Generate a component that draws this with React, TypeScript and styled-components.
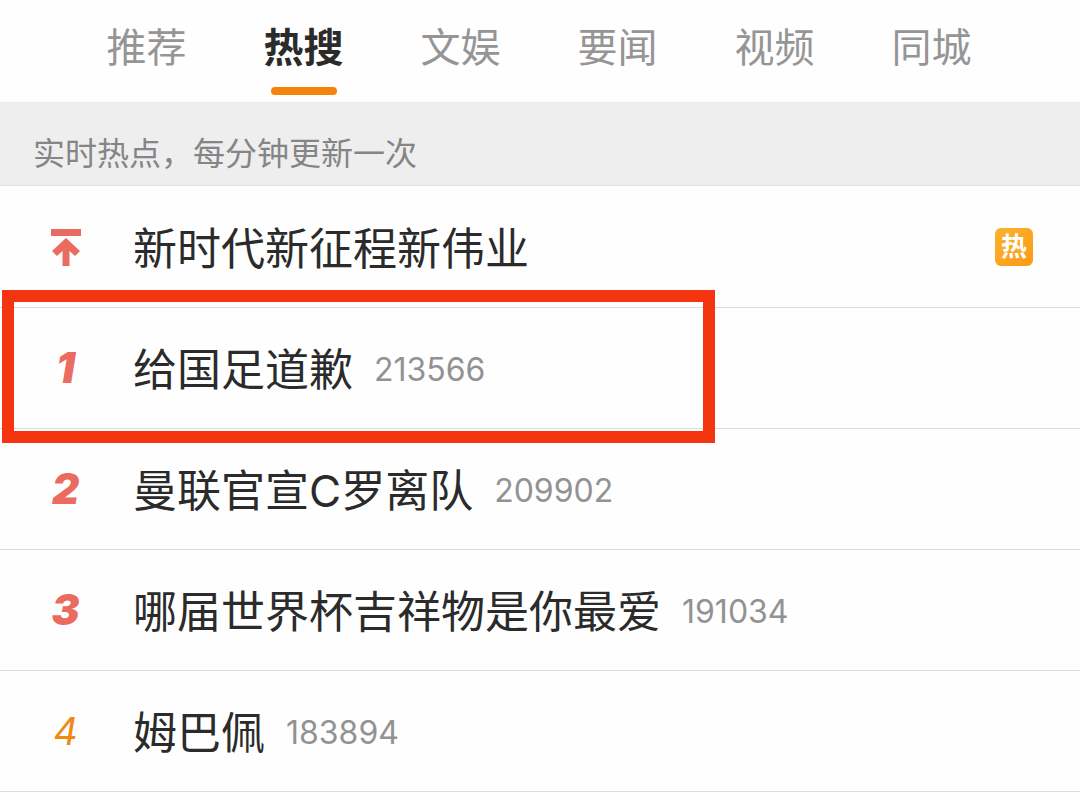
import React from "react";
import styled, { createGlobalStyle } from "styled-components";

const GlobalStyle = createGlobalStyle`
  *, *::before, *::after { box-sizing: border-box; }
  body {
    margin: 0;
    background: #fefefe;
    color: #2b2b2b;
    font-family: Inter, "Noto Sans CJK SC", sans-serif;
  }
`;

const Page = styled.main`
  min-height: 100vh;
`;

const TabBar = styled.nav`
  display: flex;
  padding: 18px 70px 7px 68px;
`;

const Tab = styled.button<{ $active: boolean }>`
  flex: 1;
  display: flex;
  flex-direction: column;
  align-items: center;
  gap: 9px;
  padding: 0;
  border: 0;
  background: none;
  font-family: inherit;
  font-size: 40px;
  line-height: 60px;
  font-weight: ${(p) => (p.$active ? 700 : 400)};
  color: ${(p) => (p.$active ? "#2b2b2b" : "#959595")};
  white-space: nowrap;
  cursor: pointer;

  &::after {
    content: "";
    width: 66px;
    height: 8px;
    border-radius: 4px;
    background: ${(p) => (p.$active ? "#f4820d" : "transparent")};
  }
`;

const Notice = styled.p`
  margin: 0;
  padding: 28px 33px 7px;
  background: #eeeeee;
  border-bottom: 1px solid #e4e4e4;
  color: #858585;
  font-size: 32px;
  line-height: 48px;
`;

const List = styled.ol`
  list-style: none;
  margin: 0;
  padding: 1px 0 0;
`;

const Item = styled.li`
  position: relative;
  border-bottom: 1px solid #dcdcdc;
`;

const TopicLink = styled.a`
  display: flex;
  align-items: center;
  height: 120px;
  padding: 0 47px 0 0;
  color: inherit;
  text-decoration: none;
`;

const Rank = styled.span<{ $hot: boolean }>`
  flex: none;
  display: flex;
  justify-content: center;
  width: 133px;
  padding-right: 2px;
  font-style: italic;
  font-size: ${(p) => (p.$hot ? 42 : 38)}px;
  line-height: 60px;
  font-weight: ${(p) => (p.$hot ? 900 : 400)};
  color: ${(p) => (p.$hot ? "#ea6b60" : "#ee8a14")};
`;

const Title = styled.span`
  padding-top: 4px;
  font-size: 44px;
  line-height: 64px;
  white-space: nowrap;
`;

const Heat = styled.span`
  margin-left: 21px;
  padding-top: 4px;
  font-size: 32px;
  line-height: 48px;
  color: #929292;
`;

const HotBadge = styled.span`
  display: flex;
  align-items: center;
  justify-content: center;
  width: 38px;
  height: 38px;
  margin-left: auto;
  border-radius: 6px;
  background: linear-gradient(135deg, #fbb32c, #f99a17);
  color: #ffffff;
  font-size: 26px;
  line-height: 38px;
  font-weight: 700;
`;

const Highlight = styled.div`
  position: absolute;
  top: -18px;
  bottom: -15px;
  left: 2px;
  width: 66%;
  border: 12px solid #f43510;
  pointer-events: none;
  z-index: 1;
`;

const PinIcon = () => (
  <svg width="30" height="37" viewBox="0 0 30 37" fill="#ea6b60" role="img" aria-label="置顶">
    <rect x="0" y="0" width="30" height="7" />
    <path d="M15 9 L29 22 L24 27 L18.500 22 V37 H11.500 V22 L6 27 L1 22 Z" />
  </svg>
);

const tabs = ["推荐", "热搜", "文娱", "要闻", "视频", "同城"];

interface Topic {
  rank?: number;
  title: string;
  heat?: string;
  badge?: string;
  highlighted?: boolean;
}

const topics: Topic[] = [
  { title: "新时代新征程新伟业", badge: "热" },
  { rank: 1, title: "给国足道歉", heat: "213566", highlighted: true },
  { rank: 2, title: "曼联官宣C罗离队", heat: "209902" },
  { rank: 3, title: "哪届世界杯吉祥物是你最爱", heat: "191034" },
  { rank: 4, title: "姆巴佩", heat: "183894" },
];

export default function App() {
  const [active, setActive] = React.useState("热搜");
  return (
    <Page lang="zh-CN">
      <GlobalStyle />
      <TabBar>
        {tabs.map((name) => (
          <Tab key={name} type="button" $active={name === active} onClick={() => setActive(name)}>
            {name}
          </Tab>
        ))}
      </TabBar>
      <Notice>实时热点，每分钟更新一次</Notice>
      <List>
        {topics.map((topic) => (
          <Item key={topic.title}>
            <TopicLink href="#">
              <Rank $hot={!topic.rank || topic.rank <= 3}>{topic.rank ?? <PinIcon />}</Rank>
              <Title>{topic.title}</Title>
              {topic.heat && <Heat>{topic.heat}</Heat>}
              {topic.badge && <HotBadge>{topic.badge}</HotBadge>}
            </TopicLink>
            {topic.highlighted && <Highlight />}
          </Item>
        ))}
      </List>
    </Page>
  );
}
